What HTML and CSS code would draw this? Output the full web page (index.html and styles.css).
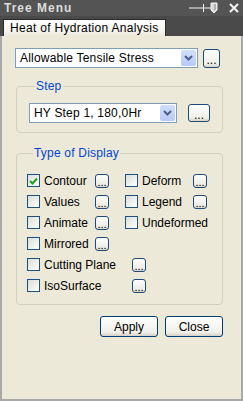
FILE: index.html
```html
<!DOCTYPE html>
<html lang="en">
<head>
    <meta charset="UTF-8">
    <title>Tree Menu</title>
    <link rel="stylesheet" href="styles.css">
</head>
<body>
<div class="window">
    <div class="titlebar">
        <span class="title">Tree Menu</span>
        <span class="title-icons">
            <svg width="34" height="12" viewBox="0 0 34 12">
                <line x1="0" y1="6" x2="22" y2="6" stroke="#f0f0f0" stroke-width="1"/>
                <line x1="14.5" y1="2" x2="14.5" y2="10" stroke="#f0f0f0" stroke-width="1"/>
                <path d="M22 1 h6 v7 l-3 3 l-3 -3 z" fill="#d8d8d8" stroke="#f4f4f4" stroke-width="1"/>
                <line x1="26" y1="2" x2="26" y2="8" stroke="#888" stroke-width="1"/>
            </svg>
            <svg width="10" height="10" viewBox="0 0 10 10">
                <path d="M1 1 L9 9 M9 1 L1 9" stroke="#f4f4f4" stroke-width="2"/>
            </svg>
        </span>
    </div>
    <div class="tabstrip">
        <div class="tab">Heat of Hydration Analysis</div>
    </div>

    <div class="panel">
        <div class="combo-row">
            <div class="combo combo-main">
                <span>Allowable Tensile Stress</span>
                <span class="drop"><svg width="9" height="6" viewBox="0 0 9 6"><path d="M1 1 L4.5 4.5 L8 1" fill="none" stroke="#4d6185" stroke-width="2"/></svg></span>
            </div>
            <button class="dots dots-main">...</button>
        </div>

        <fieldset class="group step-group">
            <legend>Step</legend>
            <div class="combo-row">
                <div class="combo combo-step">
                    <span>HY Step 1, 180,0Hr</span>
                    <span class="drop"><svg width="9" height="6" viewBox="0 0 9 6"><path d="M1 1 L4.5 4.5 L8 1" fill="none" stroke="#4d6185" stroke-width="2"/></svg></span>
                </div>
                <button class="dots dots-step">...</button>
            </div>
        </fieldset>

        <fieldset class="group display-group">
            <legend>Type of Display</legend>
            <div class="opt-grid">
                <div class="opt"><span class="check checked"><svg width="9" height="8" viewBox="0 0 9 8"><path d="M1 4 L3.5 6.5 L8 1.5" fill="none" stroke="#21a121" stroke-width="2"/></svg></span><span class="lbl">Contour</span><button class="mini">...</button></div>
                <div class="opt"><span class="check"></span><span class="lbl">Deform</span><button class="mini">...</button></div>
                <div class="opt"><span class="check"></span><span class="lbl">Values</span><button class="mini">...</button></div>
                <div class="opt"><span class="check"></span><span class="lbl">Legend</span><button class="mini">...</button></div>
                <div class="opt"><span class="check"></span><span class="lbl">Animate</span><button class="mini">...</button></div>
                <div class="opt"><span class="check"></span><span class="lbl">Undeformed</span></div>
                <div class="opt"><span class="check"></span><span class="lbl">Mirrored</span><button class="mini">...</button></div>
            </div>
            <div class="opt wide"><span class="check"></span><span class="lbl">Cutting Plane</span><button class="mini">...</button></div>
            <div class="opt wide"><span class="check"></span><span class="lbl">IsoSurface</span><button class="mini">...</button></div>
        </fieldset>

        <div class="actions">
            <button class="btn">Apply</button>
            <button class="btn">Close</button>
        </div>
    </div>
</div>
</body>
</html>
```

FILE: styles.css
```css
body {
    margin: 0;
    font-family: "Liberation Sans", Arial, sans-serif;
    font-size: 12px;
    color: #000;
    background: #ece9d8;
}

.window {
    width: 243px;
    height: 401px;
    box-sizing: border-box;
    display: flex;
    flex-direction: column;
    overflow: hidden;
}

.titlebar {
    height: 16px;
    background: #545454;
    display: flex;
    align-items: center;
    justify-content: space-between;
    padding: 0 4px 0 4px;
}

.title {
    color: #dcdcdc;
    font-weight: bold;
    font-size: 12px;
    letter-spacing: 1px;
}

.title-icons {
    display: flex;
    align-items: center;
    gap: 6px;
}

.tabstrip {
    height: 20px;
    background: #4a4a4a;
    display: flex;
    align-items: flex-end;
    padding-left: 3px;
}

.tab {
    width: 163px;
    height: 17px;
    box-sizing: border-box;
    border: 1px solid #2a2a2a;
    border-bottom: none;
    background: linear-gradient(#ffffff, #f4f3ee 70%, #ece9d8);
    padding: 1px 0 0 6px;
    line-height: 15px;
    letter-spacing: 0.3px;
}

.panel {
    flex: 1;
    background: #ece9d8;
    border: 2px solid #a8a8a8;
    border-top: none;
    padding: 12px 0 0 13px;
}

.combo-row {
    display: flex;
    align-items: center;
}

.combo {
    height: 20px;
    box-sizing: border-box;
    border: 1px solid #7f9db9;
    background: #fff;
    display: flex;
    align-items: center;
    justify-content: space-between;
    padding: 0 1px 0 4px;
    letter-spacing: 0.2px;
}

.combo-main {
    width: 183px;
}

.combo-step {
    width: 148px;
}

.drop {
    width: 15px;
    height: 16px;
    background: linear-gradient(#d2defc, #b6c9f8);
    border-radius: 2px;
    display: flex;
    align-items: center;
    justify-content: center;
}

.dots {
    font-family: "Liberation Sans", Arial, sans-serif;
    font-size: 12px;
    border: 1px solid #1c4a7a;
    border-radius: 3px;
    background: linear-gradient(#fefefe, #f0efe8 80%, #d8d4c6);
    padding: 4px 0 0 0;
    line-height: 10px;
    color: #000;
}

.dots-main {
    width: 17px;
    height: 19px;
    margin-left: 5px;
}

.dots-step {
    width: 22px;
    height: 18px;
    margin-left: 11px;
}

.group {
    margin: 0;
    border: 1px solid #d0d0bf;
    border-radius: 4px;
    padding: 0;
}

.group legend {
    color: #0046d5;
    padding: 0 1px;
    margin-left: 6px;
    font-size: 12px;
    letter-spacing: 0.2px;
}

.step-group {
    width: 207px;
    box-sizing: border-box;
    margin: 11px 0 0 1px;
    padding: 10px 0 9px 12px;
}

.display-group {
    width: 207px;
    box-sizing: border-box;
    margin: 13px 0 0 1px;
    padding: 10px 0 8px 10px;
}

.opt-grid {
    display: grid;
    grid-template-columns: 98px 1fr;
}

.opt {
    display: flex;
    align-items: center;
    height: 21px;
}

.check {
    width: 13px;
    height: 13px;
    box-sizing: border-box;
    border: 1px solid #1c5180;
    background: linear-gradient(135deg, #dcdcd7, #ffffff);
    display: flex;
    align-items: center;
    justify-content: center;
}

.lbl {
    margin-left: 4px;
    width: 51px;
    white-space: nowrap;
}

.wide .lbl {
    width: 88px;
}

.mini {
    width: 14px;
    height: 14px;
    padding: 2px 0 0 0;
    border: 1px solid #1c4a7a;
    border-radius: 3px;
    background: linear-gradient(#fefefe, #ecebe5 80%, #d6d2c2);
    font-family: "Liberation Sans", Arial, sans-serif;
    font-size: 11px;
    line-height: 6px;
    color: #000;
}

.actions {
    display: flex;
    gap: 7px;
    width: 208px;
    justify-content: flex-end;
    margin-top: 11px;
}

.btn {
    width: 58px;
    height: 21px;
    border: 1px solid #003c74;
    border-radius: 3px;
    background: linear-gradient(#ffffff, #f0f0ea 80%, #d6d0c5);
    font-family: "Liberation Sans", Arial, sans-serif;
    font-size: 12px;
    color: #000;
    padding: 0;
}
```
